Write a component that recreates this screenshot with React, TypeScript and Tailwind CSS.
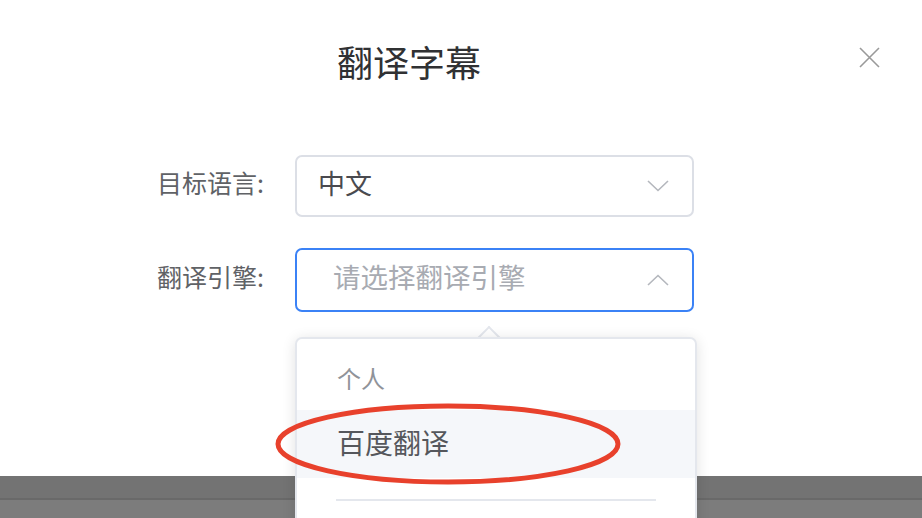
import React from "react";

const font = { fontFamily: '"Noto Sans CJK SC", "Noto Sans", sans-serif' };

function Chevron({ up }: { up?: boolean }) {
  return (
    <svg width="22" height="12" viewBox="0 0 22 12" fill="none">
      {up ? (
        <path d="M1 11 L11 1.5 L21 11" stroke="#b4b7bd" strokeWidth="1.6" />
      ) : (
        <path d="M1 1 L11 10.5 L21 1" stroke="#b4b7bd" strokeWidth="1.6" />
      )}
    </svg>
  );
}

export default function App() {
  return (
    <div
      className="relative w-[922px] h-[518px] overflow-hidden flex flex-col bg-white"
      style={font}
    >
      <div className="h-[476px] bg-white flex flex-col">
        <div className="flex items-start h-[155px]">
          <div className="pl-[337px] pt-[41px] text-[36px] leading-[40px] text-[#303133]">
            翻译字幕
          </div>
          <div className="ml-auto mr-[42px] mt-[47px]">
            <svg width="21" height="21" viewBox="0 0 21 21" fill="none">
              <path d="M1 1 L20 20 M20 1 L1 20" stroke="#9a9a9a" strokeWidth="1.6" />
            </svg>
          </div>
        </div>
        <div className="flex flex-col gap-[31px]">
          <div className="flex items-center">
            <div className="w-[264px] text-right pb-[6px] text-[25px] text-[#606266]">
              目标语言:
            </div>
            <div className="ml-[31px] w-[399px] h-[62px] border-2 border-[#dcdfe6] rounded-[7px] flex items-center pl-[21px] pr-[23px]">
              <span className="text-[27px] text-[#4a4a4f] pb-[6px]">中文</span>
              <span className="ml-auto flex">
                <Chevron />
              </span>
            </div>
          </div>
          <div className="flex items-center">
            <div className="w-[264px] text-right pb-[6px] text-[25px] text-[#606266]">
              翻译引擎:
            </div>
            <div className="ml-[31px] w-[399px] h-[64px] border-2 border-[#3b82f6] rounded-[7px] flex items-center pl-[36px] pr-[23px]">
              <span className="text-[27.5px] text-[#a8abb2] pb-[6px]">请选择翻译引擎</span>
              <span className="ml-auto flex">
                <Chevron up />
              </span>
            </div>
          </div>
        </div>
      </div>
      <div className="flex-1 flex flex-col">
        <div className="h-[22px] bg-[#737373]" />
        <div className="h-[2px] bg-[#696969]" />
        <div className="flex-1 bg-[#7c7c7c]" />
      </div>

      {/* dropdown */}
      <div className="absolute left-[295px] top-[337px] w-[402px] h-[200px] z-10">
        <div className="absolute left-[186px] top-[-8px] w-[16px] h-[16px] rotate-45 bg-white border-l-2 border-t-2 border-[#e4e7ed]" />
        <div className="relative h-full bg-white border-2 border-[#e4e7ed] rounded-[7px] shadow-[0_2px_14px_rgba(0,0,0,0.12)] flex flex-col">
          <div className="h-[71px] pl-[40px] pt-[24px] text-[24px] leading-[30px] text-[#909399]">
            个人
          </div>
          <div className="h-[68px] bg-[#f5f7fa] pl-[40px] pb-[5px] flex items-center text-[28px] text-[#55575c]">
            百度翻译
          </div>
          <div className="mt-[21px] mx-[39px] h-[2px] bg-[#e4e7ed]" />
        </div>
      </div>

      {/* annotation */}
      <svg
        className="absolute left-[273px] top-[401px] z-20"
        width="350"
        height="86"
        viewBox="0 0 350 86"
        fill="none"
      >
        <ellipse cx="175" cy="43" rx="170" ry="38" stroke="#e8412c" strokeWidth="5" />
      </svg>
    </div>
  );
}
